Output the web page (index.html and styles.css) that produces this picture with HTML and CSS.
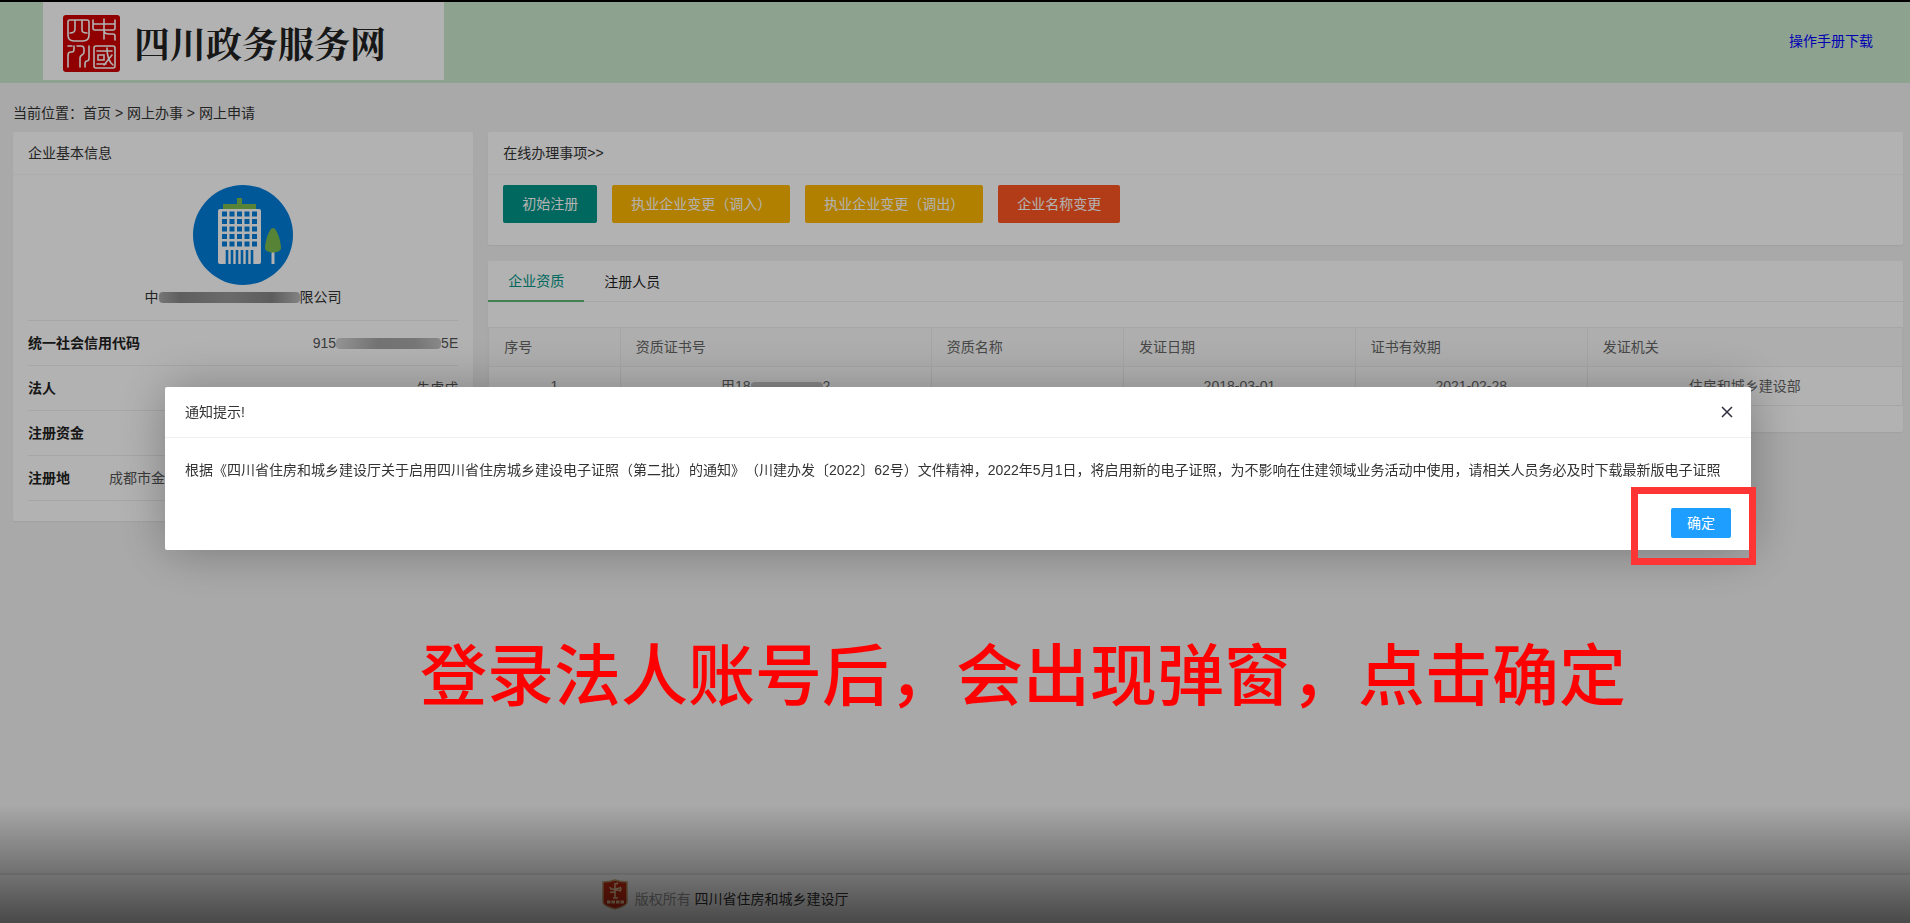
FILE: index.html
```html
<!DOCTYPE html>
<html lang="zh-CN">
<head>
    <meta charset="UTF-8">
    <meta name="viewport" content="width=device-width, initial-scale=1.0">
    <title>四川政务服务网</title>
    <link rel="stylesheet" href="styles.css">
</head>
<body>
    <header class="header">
        <div class="logo">
            <svg class="seal" viewBox="0 0 57 57" aria-hidden="true">
                <rect width="57" height="57" rx="3" fill="#d00000"/>
                <g fill="none" stroke="#fff" stroke-width="1.6" stroke-linecap="round">
                    <path d="M7 5h17q2 0 2 2v13q0 6-6 6h-9q-6 0-6-6V7q0-2 2-2zM12 5v9q0 4-5 4M19 5v10q0 3 5 3"/>
                    <path d="M30 5v8q0 2 2 2h18q2 0 2-2V5M30 9h22M41 4v20M41 15q0 4 5 4h4q2 0 2 2v4"/>
                    <path d="M5 52V40q0-3 3-3h1q2 0 2-3v-3M5 31h4M14 31h4q3 0 3 3v3q0 2-2 3t-2 3v9M26 31v12q0 3-2 3t-2 3v3"/>
                    <path d="M33 31h17q2 0 2 2v18q0 2-2 2H33q-2 0-2-2V33q0-2 2-2zM34 36h15M35 40h6v5h-6zM34 49h9M44 33q0 12 6 17M49 40l-8 10"/>
                </g>
            </svg>
            <span class="logo-text">四川政务服务网</span>
        </div>
        <a class="manual" href="#">操作手册下载</a>
    </header>

    <nav class="crumbs">当前位置：<a href="#">首页</a> &gt; <a href="#">网上办事</a> &gt; <a href="#">网上申请</a></nav>

    <main class="main">
        <section class="card">
            <h2 class="card-header">企业基本信息</h2>
            <div class="company">
                <svg class="avatar" viewBox="0 0 100 100" aria-hidden="true">
                    <circle cx="50" cy="50" r="50" fill="#007edb"/>
                    <path d="M30 19h14v-6h5v6h14v5H30z" fill="#7cbc4d"/>
                    <rect x="25" y="24" width="43" height="55" rx="2" fill="#fff"/>
                    <g stroke="#007edb" stroke-width="5" stroke-dasharray="5 2.5">
                        <path d="M29 29h35M29 36.500h35M29 44h35M29 51.500h35M29 59h35"/>
                    </g>
                    <path d="M34 65v14M39 65v14M44 65v14M49 65v14M54 65v14M59 65v14" stroke="#007edb" stroke-width="2.600"/>
                    <path d="M80 66v13" stroke="#fff" stroke-width="3"/>
                    <path d="M80 43c-4 0-8 14-8 20 0 6 16 6 16 0 0-6-4-20-8-20z" fill="#7cbc4d"/>
                </svg>
                <p class="company-name">中<span class="smudge smudge-name"></span>限公司</p>
            </div>
            <dl class="info">
                <div class="info-row"><dt>统一社会信用代码</dt><dd>915<span class="smudge smudge-code"></span>5E</dd></div>
                <div class="info-row"><dt>法人</dt><dd>朱虎成</dd></div>
                <div class="info-row"><dt>注册资金</dt><dd></dd></div>
                <div class="info-row address"><dt>注册地</dt><dd>成都市金</dd></div>
            </dl>
        </section>

        <div class="right">
            <section class="card">
                <h2 class="card-header">在线办理事项&gt;&gt;</h2>
                <div class="actions">
                    <button type="button" class="btn">初始注册</button>
                    <button type="button" class="btn btn-warm">执业企业变更（调入）</button>
                    <button type="button" class="btn btn-warm">执业企业变更（调出）</button>
                    <button type="button" class="btn btn-danger">企业名称变更</button>
                </div>
            </section>

            <section class="card">
                <div class="tabs">
                    <button type="button" class="tab active">企业资质</button>
                    <button type="button" class="tab">注册人员</button>
                </div>
                <table class="table">
                    <colgroup>
                        <col class="col-no">
                        <col class="col-cert">
                        <col class="col-name">
                        <col class="col-date">
                        <col class="col-date">
                        <col>
                    </colgroup>
                    <thead>
                        <tr><th>序号</th><th>资质证书号</th><th>资质名称</th><th>发证日期</th><th>证书有效期</th><th>发证机关</th></tr>
                    </thead>
                    <tbody>
                        <tr><td>1</td><td>甲18<span class="smudge smudge-cert"></span>2</td><td></td><td>2018-03-01</td><td>2021-02-28</td><td>住房和城乡建设部</td></tr>
                    </tbody>
                </table>
            </section>
        </div>
    </main>

    <footer class="footer">
        <svg class="badge" viewBox="0 0 26 31" aria-hidden="true">
            <path d="M1 3Q8 3 13 1q5 2 12 2v20q0 4-12 7Q1 27 1 23z" fill="#c22a12" stroke="#c9a372" stroke-width="1.500"/>
            <path d="M13 4v15M11 19h5M14 5l2-1M8 8q0 3 5 2l5-1M8 13q3 1 5-1t5 0q2-2 0-4" fill="none" stroke="#efc9a0" stroke-width="1.500"/>
            <path d="M5 23h17" stroke="#efc9a0" stroke-width="3" stroke-dasharray="3.500 1"/>
        </svg>
        <p class="copyright">版权所有 <a href="#">四川省住房和城乡建设厅</a></p>
    </footer>

    <div class="shade"></div>

    <div class="dialog" role="dialog" aria-labelledby="dialogTitle">
        <div class="dialog-title">
            <h2 id="dialogTitle">通知提示!</h2>
            <button type="button" class="close" aria-label="关闭">
                <svg viewBox="0 0 12 12"><path d="M1 1l10 10M11 1L1 11" stroke="#2e2d3c" stroke-width="1.500"/></svg>
            </button>
        </div>
        <p class="dialog-text">根据《四川省住房和城乡建设厅关于启用四川省住房城乡建设电子证照（第二批）的通知》（川建办发〔2022〕62号）文件精神，2022年5月1日，将启用新的电子证照，为不影响在住建领域业务活动中使用，请相关人员务必及时下载最新版电子证照</p>
        <div class="dialog-btns">
            <button type="button" class="ok">确定</button>
            <div class="mark"></div>
        </div>
    </div>

    <div class="fade"></div>
    <p class="caption">登录法人账号后，会出现弹窗，点击确定</p>
</body>
</html>
```

FILE: styles.css
```css
* {
    box-sizing: border-box;
    margin: 0;
    padding: 0;
}
body {
    display: flex;
    flex-direction: column;
    min-height: 100vh;
    background: #f2f2f2;
    color: #333;
    font: 14px/24px "Liberation Sans", "Noto Sans CJK SC", sans-serif;
    text-spacing-trim: space-all;
}
a {
    color: inherit;
    text-decoration: none;
}
h2 {
    font-size: 14px;
    font-weight: normal;
}
button {
    border: none;
    font: inherit;
    cursor: pointer;
}

/* header */
.header {
    display: flex;
    justify-content: space-between;
    height: 83px;
    padding: 2px 37px 3px 43px;
    background: #cce8cf;
}
.logo {
    display: flex;
    align-items: center;
    gap: 14px;
    width: 401px;
    padding: 4px 0 0 20px;
    background: #fff;
}
.seal {
    width: 57px;
    height: 57px;
}
.logo-text {
    color: #222;
    font: bold 36px/48px "Noto Serif CJK SC", "Noto Sans CJK SC", serif;
}
.manual {
    align-self: center;
    color: #00f;
}
.crumbs {
    padding: 18px 13px 7px;
}

/* cards */
.main {
    display: grid;
    grid-template-columns: 27fr 83fr;
    align-items: start;
    gap: 15px;
    padding: 0 7px 0 13px;
}
.right {
    display: grid;
    gap: 16px;
}
.card {
    background: #fff;
    border-radius: 2px;
    box-shadow: 0 1px 2px rgba(0, 0, 0, .05);
}
.card-header {
    height: 43px;
    padding: 0 15px;
    border-bottom: 1px solid #f6f6f6;
    line-height: 42px;
}
.company {
    padding-top: 10px;
    text-align: center;
}
.avatar {
    display: block;
    width: 100px;
    height: 100px;
    margin: 0 auto;
}
.company-name {
    display: flex;
    justify-content: center;
}
.info {
    margin: 11px 15px 0;
    padding-bottom: 20px;
    border-top: 1px solid #eee;
}
.info-row {
    display: flex;
    justify-content: space-between;
    height: 45px;
    border-bottom: 1px solid #eee;
    line-height: 44px;
}
.info-row dt {
    color: #222;
    font-weight: bold;
}
.info-row dd {
    display: flex;
    align-items: center;
    color: #555;
}
.address {
    justify-content: flex-start;
    gap: 39px;
}
.smudge {
    display: inline-block;
    height: 11px;
    background: linear-gradient(90deg, #aaa, #888 15%, #999 50%, #858585 80%, #bbb);
    border-radius: 4px;
}
.smudge-name {
    align-self: center;
    width: 141px;
}
.smudge-code {
    width: 105px;
    background: linear-gradient(90deg, #d5d5d5, #a5a5a5 40%, #aaa 75%, #c5c5c5);
}
.smudge-cert {
    width: 72px;
    background: #c5c5c5;
    vertical-align: middle;
}

.actions {
    display: flex;
    gap: 15px;
    padding: 10px 15px 22px;
}
.btn {
    height: 38px;
    padding: 0 19px;
    background: #009688;
    border-radius: 2px;
    color: #fff;
}
.btn-warm {
    background: #ffb800;
}
.btn-danger {
    background: #ff5722;
}

.tabs {
    display: flex;
    height: 41px;
    border-bottom: 1px solid #eee;
}
.tab {
    height: 41px;
    padding: 0 20px;
    background: none;
    color: #222;
}
.tab.active {
    border-bottom: 2px solid #5fb878;
    color: #009688;
}
.table {
    width: 100%;
    margin: 25px 0;
    border-collapse: collapse;
    table-layout: fixed;
    color: #666;
}
.table th,
.table td {
    height: 39px;
    padding: 0 15px;
    border: 1px solid #eee;
    text-align: center;
}
.table th {
    background: #f9f9f9;
    font-weight: normal;
    text-align: left;
}
.card:last-child {
    padding-bottom: 1px;
}
.col-no { width: 9.3%; }
.col-cert { width: 22%; }
.col-name { width: 13.6%; }
.col-date { width: 16.4%; }

/* footer */
.footer {
    display: flex;
    gap: 7px;
    height: 50px;
    margin-top: auto;
    padding: 4px 0 0 31.5%;
    border-top: 2px solid #e2e2e2;
    background: #f9f9f9;
    color: #999;
}
.badge {
    width: 26px;
    height: 31px;
}
.copyright {
    padding-top: 8px;
}
.copyright a {
    color: #333;
}

/* notice dialog */
.shade {
    position: fixed;
    inset: 0;
    border-top: 2px solid #000;
    background: rgba(0, 0, 0, .3);
}
.dialog {
    position: fixed;
    top: 387px;
    left: 165px;
    right: 159px;
    background: #fff;
    border-radius: 2px;
    box-shadow: 1px 1px 50px rgba(0, 0, 0, .3);
}
.dialog-title {
    display: flex;
    align-items: center;
    justify-content: space-between;
    height: 51px;
    padding: 0 18px 0 20px;
    border-bottom: 1px solid #f0f0f0;
}
.close {
    width: 12px;
    height: 12px;
    background: none;
}
.close svg {
    display: block;
}
.dialog-text {
    padding: 20px;
}
.dialog-btns {
    position: relative;
    display: flex;
    justify-content: flex-end;
    padding: 6px 20px 12px;
}
.ok {
    width: 60px;
    height: 30px;
    background: #1e9fff;
    border-radius: 2px;
    color: #fff;
}
.mark {
    position: absolute;
    top: -15px;
    right: -5px;
    width: 125px;
    height: 78px;
    border: 7px solid #ff3535;
}

/* video caption */
.fade {
    position: fixed;
    inset: auto 0 0;
    height: 118px;
    background: linear-gradient(rgba(0, 0, 0, 0), rgba(0, 0, 0, .58));
}
.caption {
    position: fixed;
    top: 631px;
    left: 0;
    right: 0;
    padding-left: 136px;
    color: #f00;
    font: 500 67px/80px "Noto Sans CJK SC", sans-serif;
    text-align: center;
}
```
